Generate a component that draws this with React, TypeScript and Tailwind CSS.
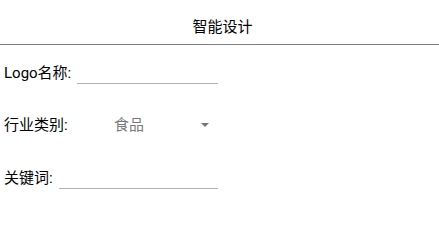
export default function App() {
  return (
    <div className="w-[439px] h-[245px] bg-white text-[15px] text-black" style={{ fontFamily: 'Roboto, "Noto Sans CJK SC", sans-serif' }}>
      <header className="h-[45px] flex justify-center border-b border-[#808080]">
        <span className="text-[15px] leading-[20px] mt-[17px] pl-[6px]">智能设计</span>
      </header>

      <div className="pl-[4px]">
        <div className="mt-[17px] flex items-end h-[22px]">
          <span className="leading-[22px]">Logo名称:</span>
          <div className="ml-[6px] w-[141px] h-[19px] border-b border-[#b0b0b0]" />
        </div>

        <div className="mt-[30px] flex items-center h-[22px]">
          <span className="leading-[22px] w-[110px]">行业类别:</span>
          <span className="text-[#7a7a7a] w-[86px]">食品</span>
          <svg width="8" height="4" viewBox="0 0 8 4" className="ml-[1px]">
            <path d="M0 0 L8 0 L4 4 Z" fill="#777" />
          </svg>
        </div>

        <div className="mt-[31px] flex items-end h-[22px]">
          <span className="leading-[22px]">关键词:</span>
          <div className="ml-[6px] w-[159px] h-[19px] border-b border-[#b0b0b0]" />
        </div>
      </div>
    </div>
  );
}
